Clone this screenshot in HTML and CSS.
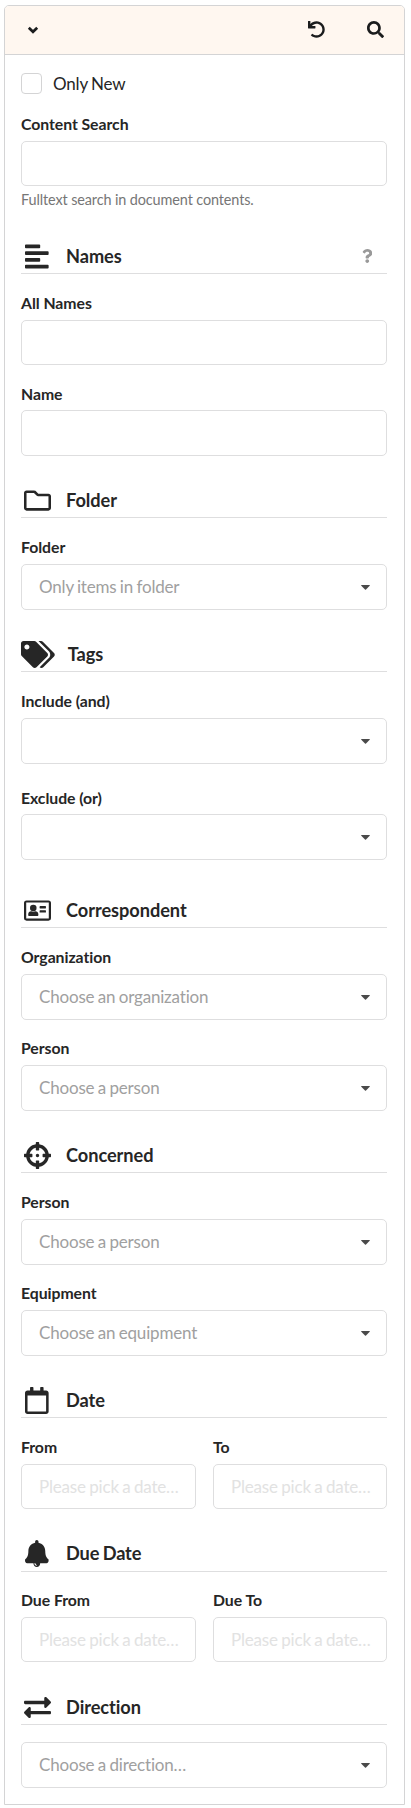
FILE: index.html
```html
<!DOCTYPE html>
<html lang="en">
<head>
<meta charset="utf-8">
<title>Search</title>
<link rel="stylesheet" href="styles.css">
</head>
<body>
<svg class="defs" aria-hidden="true">
  <symbol id="caret" viewBox="0 0 9 5"><path d="M.6 0h7.8q.8.1.3.8L5 4.6q-.5.4-1 0L.3.8Q-.2.1.6 0z"/></symbol>
</svg>
<main class="panel">
  <header class="toolbar">
    <svg class="tool tool-toggle" viewBox="0 0 12 8"><path d="M1.800 1.800L6 5.800l4.200-4"/></svg>
    <svg class="tool tool-reset" viewBox="0 0 512 512"><path d="M212.333 224.333H12c-6.627 0-12-5.373-12-12V12C0 5.373 5.373 0 12 0h48c6.627 0 12 5.373 12 12v78.112C117.773 39.279 184.260 7.470 258.175 8.007c136.906.994 246.448 111.623 246.157 248.532C504.041 393.258 393.120 504 256.333 504c-64.089 0-122.496-24.313-166.510-64.215-5.099-4.622-5.334-12.554-.467-17.420l33.967-33.967c4.474-4.474 11.662-4.717 16.401-.525C170.760 415.336 211.580 432 256.333 432c97.268 0 176-78.716 176-176 0-97.267-78.716-176-176-176-58.496 0-110.280 28.476-142.274 72.333h98.274c6.627 0 12 5.373 12 12v48c0 6.627-5.373 12-12 12z"/></svg>
    <svg class="tool tool-search" viewBox="0 0 512 512"><path d="M505 442.700L405.300 343c-4.500-4.500-10.600-7-17-7H372c27.600-35.300 44-79.700 44-128C416 93.100 322.900 0 208 0S0 93.100 0 208s93.100 208 208 208c48.300 0 92.700-16.400 128-44v16.300c0 6.400 2.500 12.500 7 17l99.700 99.700c9.400 9.400 24.600 9.400 33.900 0l28.300-28.300c9.400-9.400 9.400-24.600.1-34zM208 336c-70.700 0-128-57.200-128-128 0-70.700 57.200-128 128-128 70.700 0 128 57.200 128 128 0 70.700-57.200 128-128 128z"/></svg>
  </header>
  <form class="form">
    <div class="check"><span class="box"></span><span>Only New</span></div>
    <div class="field first"><label>Content Search</label><div class="input"></div></div>
    <p class="help">Fulltext search in document contents.</p>

    <h2 class="heading names">
      <span class="icon"><svg viewBox="0 0 448 512"><path d="M288 44v40c0 8.837-7.163 16-16 16H16c-8.837 0-16-7.163-16-16V44c0-8.837 7.163-16 16-16h256c8.837 0 16 7.163 16 16zM0 172v40c0 8.837 7.163 16 16 16h416c8.837 0 16-7.163 16-16v-40c0-8.837-7.163-16-16-16H16c-8.837 0-16 7.163-16 16zm16 312h416c8.837 0 16-7.163 16-16v-40c0-8.837-7.163-16-16-16H16c-8.837 0-16 7.163-16 16v40c0 8.837 7.163 16 16 16zm256-200H16c-8.837 0-16 7.163-16 16v40c0 8.837 7.163 16 16 16h256c8.837 0 16-7.163 16-16v-40c0-8.837-7.163-16-16-16z"/></svg></span>
      <span>Names</span>
      <svg class="question" viewBox="0 0 384 512"><path d="M202.021 0C122.202 0 70.503 32.703 29.914 91.026c-7.363 10.580-5.093 25.086 5.178 32.874l43.138 32.709c10.373 7.865 25.132 6.026 33.253-4.148 25.049-31.381 43.630-49.449 82.757-49.449 30.764 0 68.816 19.799 68.816 49.631 0 22.552-18.617 34.134-48.993 51.164-35.423 19.860-82.299 44.576-82.299 106.405V320c0 13.255 10.745 24 24 24h72.471c13.255 0 24-10.745 24-24v-5.773c0-42.860 125.268-44.645 125.268-160.627C377.504 66.256 286.902 0 202.021 0zM192 373.459c-38.196 0-69.271 31.075-69.271 69.271 0 38.195 31.075 69.270 69.271 69.270s69.271-31.075 69.271-69.271-31.075-69.270-69.271-69.270z"/></svg>
    </h2>
    <div class="field"><label>All Names</label><div class="input"></div></div>
    <div class="field next tight"><label>Name</label><div class="input tall"></div></div>

    <h2 class="heading">
      <span class="icon"><svg viewBox="0 0 512 512"><path d="M464 128H272l-54.630-54.630c-6-6-14.140-9.370-22.630-9.370H48C21.490 64 0 85.490 0 112v288c0 26.510 21.490 48 48 48h416c26.510 0 48-21.490 48-48V176c0-26.510-21.490-48-48-48zm0 272H48V112h140.120l54.630 54.630c6 6 14.140 9.370 22.630 9.370H464v224z"/></svg></span>
      <span>Folder</span>
    </h2>
    <div class="field"><label>Folder</label><div class="input tall select"><span>Only items in folder</span><svg class="caret"><use href="#caret"/></svg></div></div>

    <h2 class="heading">
      <span class="icon"><svg viewBox="0 0 640 512"><path d="M497.941 225.941L286.059 14.059A48 48 0 0 0 252.118 0H48C21.490 0 0 21.490 0 48v204.118a48 48 0 0 0 14.059 33.941l211.882 211.882c18.744 18.745 49.136 18.746 67.882 0l204.118-204.118c18.745-18.745 18.745-49.137 0-67.882zM112 160c-26.510 0-48-21.490-48-48s21.490-48 48-48 48 21.490 48 48-21.490 48-48 48zm513.941 133.823L421.823 497.941c-18.745 18.745-49.137 18.745-67.882 0l-.360-.360L527.640 323.522c16.999-16.999 26.360-39.600 26.360-63.640s-9.362-46.641-26.360-63.640L331.397 0h48.721a48 48 0 0 1 33.941 14.059l211.882 211.882c18.745 18.745 18.745 49.137 0 67.882z"/></svg></span>
      <span>Tags</span>
    </h2>
    <div class="field"><label>Include (and)</label><div class="input tall select"><span></span><svg class="caret"><use href="#caret"/></svg></div></div>
    <div class="field next spaced"><label>Exclude (or)</label><div class="input tall select"><span></span><svg class="caret"><use href="#caret"/></svg></div></div>

    <h2 class="heading apart">
      <span class="icon"><svg viewBox="0 0 512 512"><path fill-rule="evenodd" d="M48 64h416a48 48 0 0 1 48 48v288a48 48 0 0 1-48 48H48a48 48 0 0 1-48-48V112a48 48 0 0 1 48-48zm-6 42v300h428V106z"/><circle cx="176" cy="208" r="62"/><path d="M80 344v-18c0-34 26-54 56-54 14 6 26 8 40 8s26-2 40-8c30 0 56 20 56 54v18c0 8-8 16-18 16H98c-10 0-18-8-18-16zM304 172h104q8 0 8 8v28q0 8-8 8H304q-8 0-8-8v-28q0-8 8-8zM304 252h104q8 0 8 8v28q0 8-8 8H304q-8 0-8-8v-28q0-8 8-8z"/></svg></span>
      <span>Correspondent</span>
    </h2>
    <div class="field"><label>Organization</label><div class="input tall select"><span>Choose an organization</span><svg class="caret"><use href="#caret"/></svg></div></div>
    <div class="field next"><label>Person</label><div class="input tall select"><span>Choose a person</span><svg class="caret"><use href="#caret"/></svg></div></div>

    <h2 class="heading">
      <span class="icon"><svg viewBox="0 0 512 512"><path d="M500 224h-30.364C455.724 130.325 381.675 56.276 288 42.364V12c0-6.627-5.373-12-12-12h-40c-6.627 0-12 5.373-12 12v30.364C130.325 56.276 56.276 130.325 42.364 224H12c-6.627 0-12 5.373-12 12v40c0 6.627 5.373 12 12 12h30.364C56.276 381.675 130.325 455.724 224 469.636V500c0 6.627 5.373 12 12 12h40c6.627 0 12-5.373 12-12v-30.364C381.675 455.724 455.724 381.675 469.636 288H500c6.627 0 12-5.373 12-12v-40c0-6.627-5.373-12-12-12zM288 404.634V364c0-6.627-5.373-12-12-12h-40c-6.627 0-12 5.373-12 12v40.634C165.826 392.232 119.783 346.243 107.366 288H148c6.627 0 12-5.373 12-12v-40c0-6.627-5.373-12-12-12h-40.634C119.768 165.826 165.757 119.783 224 107.366V148c0 6.627 5.373 12 12 12h40c6.627 0 12-5.373 12-12v-40.634C346.174 119.768 392.217 165.757 404.634 224H364c-6.627 0-12 5.373-12 12v40c0 6.627 5.373 12 12 12h40.634C392.232 346.174 346.243 392.217 288 404.634zM288 256c0 17.673-14.327 32-32 32s-32-14.327-32-32c0-17.673 14.327-32 32-32s32 14.327 32 32z"/></svg></span>
      <span>Concerned</span>
    </h2>
    <div class="field"><label>Person</label><div class="input tall select"><span>Choose a person</span><svg class="caret"><use href="#caret"/></svg></div></div>
    <div class="field next"><label>Equipment</label><div class="input tall select"><span>Choose an equipment</span><svg class="caret"><use href="#caret"/></svg></div></div>

    <h2 class="heading">
      <span class="icon"><svg viewBox="0 0 448 512"><path d="M400 64h-48V12c0-6.600-5.400-12-12-12h-40c-6.600 0-12 5.400-12 12v52H160V12c0-6.600-5.400-12-12-12h-40c-6.600 0-12 5.400-12 12v52H48C21.500 64 0 85.500 0 112v352c0 26.500 21.500 48 48 48h352c26.500 0 48-21.500 48-48V112c0-26.500-21.500-48-48-48zm-6 400H54c-3.300 0-6-2.700-6-6V160h352v298c0 3.300-2.700 6-6 6z"/></svg></span>
      <span>Date</span>
    </h2>
    <div class="pair">
      <div class="field"><label>From</label><div class="input date">Please pick a date…</div></div>
      <div class="field"><label>To</label><div class="input date">Please pick a date…</div></div>
    </div>

    <h2 class="heading after-dates due">
      <span class="icon"><svg viewBox="0 0 448 512"><path fill-rule="evenodd" d="M439.390 362.290c-19.320-20.760-55.470-51.990-55.470-154.290 0-77.700-54.480-139.900-127.940-155.160V32c0-17.670-14.320-32-31.980-32s-31.980 14.330-31.980 32v20.840C118.560 68.100 64.080 130.300 64.080 208c0 102.300-36.150 133.530-55.470 154.290-6 6.450-8.660 14.160-8.610 21.710.110 30 12.980 56 40 56H160c0 40 28 72 64 72s64-32 64-72h120c27 0 40-26 40-56 .05-7.550-2.610-15.270-8.610-21.710zM224 490c-28 0-46-20-46-48h20c0 16 10 30 26 30z"/></svg></span>
      <span>Due Date</span>
    </h2>
    <div class="pair close">
      <div class="field"><label>Due From</label><div class="input date">Please pick a date…</div></div>
      <div class="field"><label>Due To</label><div class="input date">Please pick a date…</div></div>
    </div>

    <h2 class="heading after-dates">
      <span class="icon"><svg viewBox="0 0 512 512"><path d="M0 168v-16c0-13.255 10.745-24 24-24h360V80c0-21.367 25.899-32.042 40.971-16.971l80 80c9.372 9.373 9.372 24.569 0 33.941l-80 80C409.956 271.982 384 261.456 384 240v-48H24c-13.255 0-24-10.745-24-24zm488 152H128v-48c0-21.314-25.862-32.080-40.971-16.971l-80 80c-9.372 9.373-9.372 24.569 0 33.941l80 80C102.057 463.997 128 453.437 128 432v-48h360c13.255 0 24-10.745 24-24v-16c0-13.255-10.745-24-24-24z"/></svg></span>
      <span>Direction</span>
    </h2>
    <div class="input tall select direction"><span>Choose a direction…</span><svg class="caret"><use href="#caret"/></svg></div>
  </form>
</main>
</body>
</html>
```
FILE: styles.css
```css
* { box-sizing: border-box; }
body {
  margin: 0;
  padding: 5px 6px 3px 4px;
  background: #fff;
  color: #262626;
  font: 17px/20px Lato, sans-serif;
  letter-spacing: -.18px;
  word-spacing: -.8px;
  font-variant-ligatures: none;
}
.defs { display: none; }
svg { fill: currentColor; }
.panel {
  height: 1800px;
  border: 1px solid #d4d4d5;
  border-radius: 5px 5px 0 0;
}
.toolbar {
  display: flex;
  align-items: center;
  height: 49px;
  padding: 0 20px 1px 22px;
  border-bottom: 1px solid #d4d4d5;
  border-radius: 4px 4px 0 0;
  background: #fff7f0;
  color: #1b1c1d;
}
.tool { width: 17px; height: 17px; }
.tool-toggle { width: 12px; height: 8px; fill: none; stroke: currentColor; stroke-width: 2.7px; }
.tool-reset { margin-left: auto; margin-right: 42px; }
.form { padding: 18px 17px 0 16px; }
.check { display: flex; align-items: center; gap: 11px; height: 21px; }
.box { width: 21px; height: 21px; border: 1px solid #d4d4d5; border-radius: 4px; }
.field { padding-top: 19px; }
.field.first { padding-top: 20px; }
.field.next { padding-top: 18px; }
.field.next.tight { padding-top: 19px; }
.field.next.spaced { padding-top: 24px; }
.field label {
  display: block;
  margin-bottom: 7px;
  font-size: 15.8px;
  font-weight: 700;
  line-height: 20px;
  letter-spacing: -.05px;
  word-spacing: 0;
}
.tight label, .spaced label { margin-bottom: 6px; }
.input {
  height: 45px;
  border: 1px solid #dededf;
  border-radius: 5px;
  padding: 0 17px;
  line-height: 43px;
  white-space: nowrap;
}
.input.tall { height: 46px; line-height: 44px; }
.select {
  display: flex;
  align-items: center;
  justify-content: space-between;
  padding-right: 16px;
  color: #a0a0a0;
}
.caret { width: 9px; height: 5px; color: #4a4a4a; margin-top: 1px; }
.date { color: #e2e2e2; }
.help {
  margin: 4px 0 0;
  color: #767676;
  font-size: 14.45px;
  line-height: 20px;
  letter-spacing: -.12px;
  word-spacing: 0;
}
.heading {
  display: flex;
  align-items: center;
  height: 38px;
  margin: 24px 0 0;
  padding-top: 3px;
  border-bottom: 1px solid #dededf;
  font-size: 18.2px;
  font-weight: 700;
  line-height: 24px;
  letter-spacing: -.05px;
  word-spacing: -.8px;
}
.heading.names { margin-top: 26px; }
.heading.apart { margin-top: 30px; }
.heading.after-dates { margin-top: 25px; }
.heading.due { padding-top: 1px; letter-spacing: -.15px; }
.icon { display: flex; justify-content: center; min-width: 32px; margin-right: 13px; }
.icon svg { height: 27px; }
.question { height: 14px; margin-left: auto; margin-right: 15px; color: #999; }
.pair { display: grid; grid-template-columns: 175px 174px; gap: 17px; }
.pair.close .field { padding-top: 18px; }
.direction { margin-top: 17px; }
```
